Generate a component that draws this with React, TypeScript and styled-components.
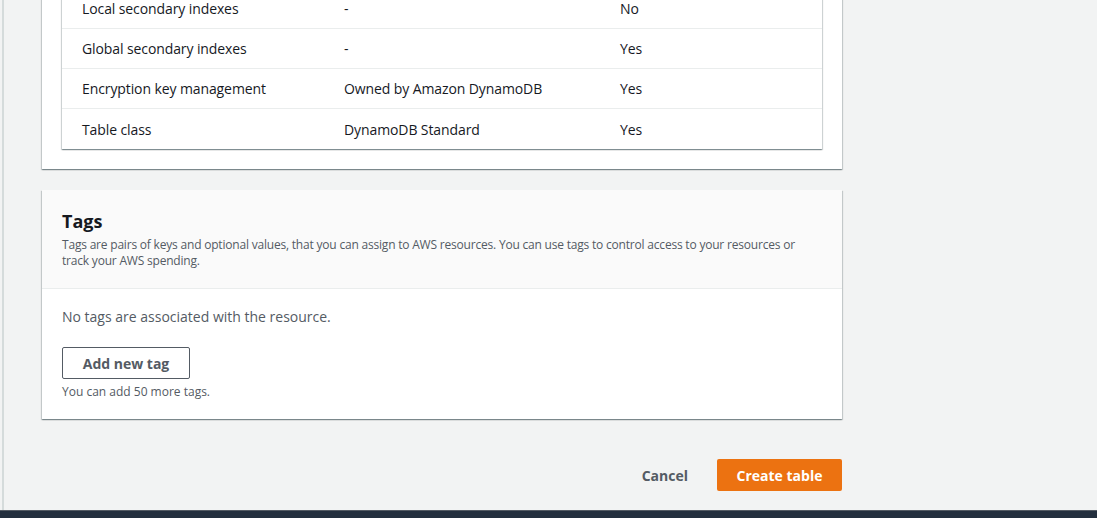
import React from "react";
import styled, { createGlobalStyle } from "styled-components";

const Global = createGlobalStyle`
  html, body { margin: 0; padding: 0; }
  body {
    background: #f2f3f3;
    font-family: "Open Sans", "Noto Sans", Arial, sans-serif;
    color: #16191f;
    overflow: hidden;
  }
`;

const Page = styled.div`
  width: 1097px;
  height: 518px;
  display: flex;
  flex-direction: column;
  overflow: hidden;
  background: #f2f3f3;
`;

const Body = styled.div`
  flex: 1;
  display: flex;
  border-left: 2px solid #d5dbdb;
  margin-left: 2px;
  min-height: 0;
`;

const Content = styled.div`
  width: 800px;
  margin-left: 38px;
  display: flex;
  flex-direction: column;
  margin-top: -11px;
`;

const Card = styled.section<{ $pad?: boolean }>`
  background: #fff;
  box-shadow: 0 1px 1px 0 rgba(0, 28, 36, 0.3), 1px 1px 1px 0 rgba(0, 28, 36, 0.15),
    -1px 1px 1px 0 rgba(0, 28, 36, 0.15);
  padding: ${(p) => (p.$pad ? "0 20px 20px" : "0")};
`;

const Table = styled.div`
  background: #fff;
  box-shadow: 0 1px 1px 0 rgba(0, 28, 36, 0.3), 1px 1px 1px 0 rgba(0, 28, 36, 0.15),
    -1px 1px 1px 0 rgba(0, 28, 36, 0.15);
`;

const Row = styled.div<{ $last?: boolean }>`
  display: grid;
  grid-template-columns: 262px 276px 1fr;
  height: 40px;
  align-items: center;
  padding-left: 20px;
  border-bottom: ${(p) => (p.$last ? "none" : "1px solid #eaeded")};
  box-sizing: border-box;
  font-size: 14px;
  letter-spacing: -0.1px;
  color: #16191f;
`;

const Cell = styled.div`
  white-space: nowrap;
`;

const TagsCard = styled(Card)`
  margin-top: 21px;
`;

const TagsHeader = styled.header`
  background: #fafafa;
  border-bottom: 1px solid #eaeded;
  padding: 19px 20px 19px;
`;

const Title = styled.h2`
  margin: 0;
  font-size: 18px;
  font-weight: 700;
  line-height: 24px;
  color: #16191f;
`;

const Desc = styled.p`
  margin: 4px 0 0;
  font-size: 12px;
  line-height: 16px;
  letter-spacing: -0.2px;
  color: #545b64;
  max-width: 745px;
`;

const TagsBody = styled.div`
  padding: 17px 20px 19px;
  display: flex;
  flex-direction: column;
  align-items: flex-start;
`;

const Empty = styled.p`
  margin: 0;
  font-size: 14px;
  line-height: 22px;
  color: #545b64;
`;

const OutlineButton = styled.button`
  margin-top: 19px;
  width: 128px;
  height: 32px;
  border: 1px solid #545b64;
  border-radius: 2px;
  background: #fff;
  font-family: inherit;
  font-size: 14px;
  font-weight: 700;
  color: #545b64;
`;

const Hint = styled.p`
  margin: 5px 0 0;
  font-size: 12px;
  line-height: 16px;
  color: #545b64;
`;

const Actions = styled.div`
  margin-top: 40px;
  display: flex;
  justify-content: flex-end;
  align-items: center;
  gap: 29px;
`;

const TextButton = styled.button`
  border: none;
  background: none;
  padding: 0;
  font-family: inherit;
  font-size: 14px;
  font-weight: 700;
  color: #545b64;
`;

const PrimaryButton = styled.button`
  width: 125px;
  height: 32px;
  border: none;
  border-radius: 2px;
  background: #ec7211;
  color: #fff;
  font-family: inherit;
  font-size: 14px;
  font-weight: 700;
`;

const Footer = styled.footer`
  height: 7px;
  flex: none;
  background: #232f3e;
  border-top: 1px solid #545b64;
`;

const rows = [
  ["Local secondary indexes", "-", "No"],
  ["Global secondary indexes", "-", "Yes"],
  ["Encryption key management", "Owned by Amazon DynamoDB", "Yes"],
  ["Table class", "DynamoDB Standard", "Yes"],
];

export default function App() {
  return (
    <Page>
      <Global />
      <Body>
        <Content>
          <Card $pad>
            <Table>
              {rows.map((r, i) => (
                <Row key={r[0]} $last={i === rows.length - 1}>
                  <Cell>{r[0]}</Cell>
                  <Cell>{r[1]}</Cell>
                  <Cell>{r[2]}</Cell>
                </Row>
              ))}
            </Table>
          </Card>
          <TagsCard>
            <TagsHeader>
              <Title>Tags</Title>
              <Desc>
                Tags are pairs of keys and optional values, that you can assign to AWS resources. You can use tags to
                control access to your resources or track your AWS spending.
              </Desc>
            </TagsHeader>
            <TagsBody>
              <Empty>No tags are associated with the resource.</Empty>
              <OutlineButton>Add new tag</OutlineButton>
              <Hint>You can add 50 more tags.</Hint>
            </TagsBody>
          </TagsCard>
          <Actions>
            <TextButton>Cancel</TextButton>
            <PrimaryButton>Create table</PrimaryButton>
          </Actions>
        </Content>
      </Body>
      <Footer />
    </Page>
  );
}
